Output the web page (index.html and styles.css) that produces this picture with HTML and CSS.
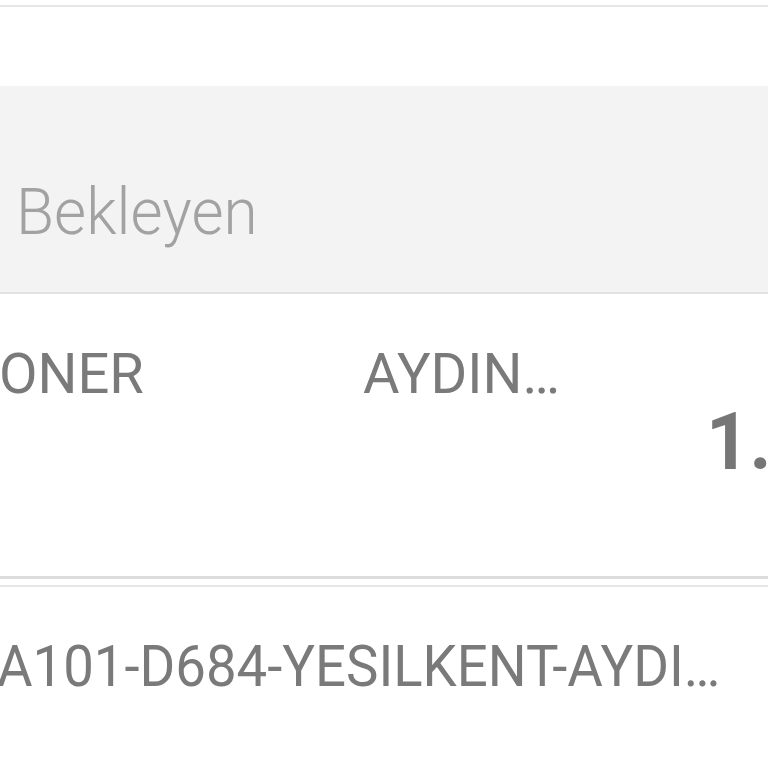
FILE: index.html
```html
<!DOCTYPE html>
<html lang="tr">
<head>
<meta charset="utf-8">
<title>Bekleyen</title>
<link rel="stylesheet" href="styles.css">
</head>
<body>
<div class="screen">
  <div class="top"></div>
  <div class="section-header">
    <span class="section-title">Bekleyen</span>
  </div>
  <div class="row">
    <div class="cell cell-name"><span class="txt">ONER</span></div>
    <div class="cell cell-city"><span class="txt">AYDIN…</span></div>
    <div class="cell cell-amount"><span class="amount">1.250</span></div>
  </div>
  <div class="divider-thick"></div>
  <div class="divider-thin"></div>
  <div class="row row-store">
    <span class="txt store">A101-D684-YESILKENT-AYDI…</span>
  </div>
</div>
</body>
</html>
```
FILE: styles.css
```css
html, body {
  margin: 0;
  padding: 0;
  background: #ffffff;
}
.screen {
  width: 768px;
  height: 768px;
  overflow: hidden;
  font-family: Roboto, "Noto Sans", sans-serif;
  background: #ffffff;
}
.top {
  margin-top: 5px;
  height: 79px;
  border-top: 2px solid #e6e6e6;
  background: #ffffff;
}
.section-header {
  height: 208px;
  background: #f3f3f3;
  border-bottom: 2px solid #e2e2e2;
  box-sizing: border-box;
  padding-top: 95px;
  padding-left: 16px;
  white-space: nowrap;
}
.section-title {
  display: inline-block;
  font-size: 64px;
  line-height: 64px;
  font-weight: 300;
  color: #a2a2a2;
  transform: scaleX(0.97);
  transform-origin: left center;
}
.row {
  display: flex;
  align-items: flex-start;
  height: 282px;
  box-sizing: border-box;
  padding-top: 52px;
  white-space: nowrap;
}
.cell-name {
  width: 364px;
  margin-left: -1px;
  flex: none;
}
.cell-city {
  width: 348px;
  flex: none;
}
.cell-amount {
  flex: none;
  padding-top: 56px;
  margin-left: -5px;
}
.txt {
  display: inline-block;
  font-size: 56px;
  line-height: 56px;
  color: #7a7a7a;
  transform-origin: left center;
}
.amount {
  display: inline-block;
  font-size: 80px;
  line-height: 80px;
  font-weight: 700;
  color: #767676;
  transform: scaleX(0.95);
  transform-origin: left center;
}
.divider-thick {
  height: 3px;
  background: #dcdcdc;
}
.divider-thin {
  margin-top: 6px;
  height: 2px;
  background: #e6e6e6;
}
.row-store {
  height: auto;
  padding-top: 50px;
  margin-left: -3px;
}
.store {
  font-size: 58px;
  line-height: 58px;
  transform: scaleX(0.94);
}
```
